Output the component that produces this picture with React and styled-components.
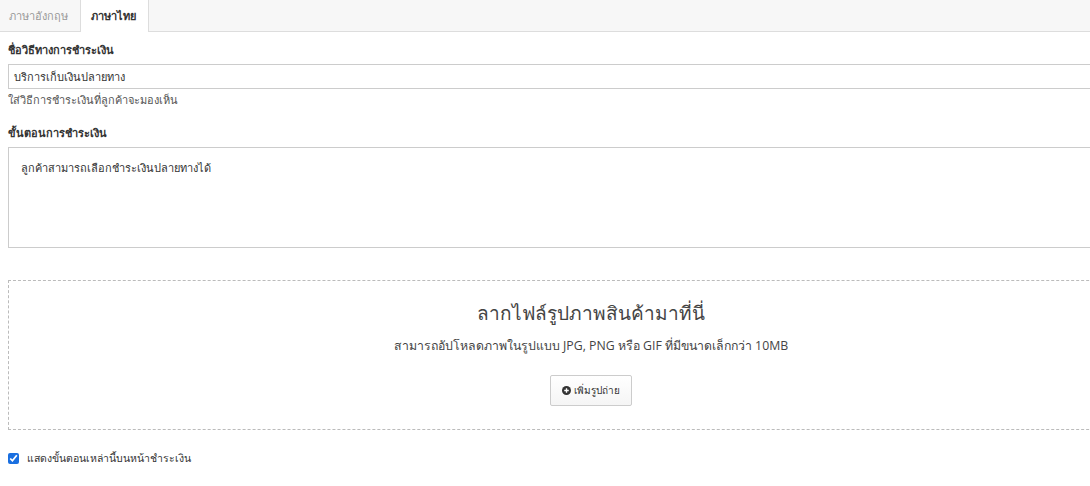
import React from "react";
import styled, { createGlobalStyle } from "styled-components";

const Global = createGlobalStyle`
  html, body { margin: 0; padding: 0; background: #fff; overflow: hidden; }
  body { font-family: "Open Sans", "Noto Sans", sans-serif; color: #333; }
`;

const Page = styled.div`
  width: 1182px;
`;

const TabBar = styled.div`
  display: flex;
  height: 31px;
  background: #f7f7f7;
  border-bottom: 1px solid #ddd;
  width: 1090px;
`;

const Tab = styled.div`
  display: flex;
  align-items: center;
  padding: ${(p) => (p.$active ? "0 12px 0 10px" : "0 11px 0 8px")};
  font-size: 11px;
  color: ${(p) => (p.$active ? "#333" : "#999")};
  font-weight: ${(p) => (p.$active ? 600 : 400)};
  background: ${(p) => (p.$active ? "#fff" : "transparent")};
  border-left: 1px solid ${(p) => (p.$active ? "#ddd" : "transparent")};
  border-right: 1px solid ${(p) => (p.$active ? "#ddd" : "transparent")};
  height: 32px;
  box-sizing: border-box;
  margin-bottom: -1px;
`;

const Form = styled.div`
  padding: 0 8px;
`;

const Field = styled.div`
  display: flex;
  flex-direction: column;
`;

const Label = styled.label`
  font-size: 11px;
  font-weight: 700;
  color: #333;
  margin-top: ${(p) => p.$top}px;
  margin-bottom: 6px;
  line-height: 16px;
`;

const Input = styled.div`
  height: 25px;
  box-sizing: border-box;
  border: 1px solid #ccc;
  padding: 0 5px;
  font-size: 11px;
  display: flex;
  align-items: center;
  color: #333;
`;

const Help = styled.div`
  font-size: 11px;
  color: #555;
  margin-top: 3px;
  line-height: 15px;
`;

const TextArea = styled.div`
  height: 101px;
  box-sizing: border-box;
  border: 1px solid #ccc;
  padding: 12px 12px;
  font-size: 11px;
  color: #333;
  line-height: 16px;
`;

const Drop = styled.div`
  margin-top: 32px;
  height: 150px;
  box-sizing: border-box;
  border: 1px dashed #bbb;
  display: flex;
  flex-direction: column;
  align-items: center;
  padding-top: 17px;
`;

const DropTitle = styled.div`
  font-size: 19px;
  color: #444;
  line-height: 30px;
`;

const DropSub = styled.div`
  font-size: 12.3px;
  color: #444;
  margin-top: 9px;
  line-height: 18px;
`;

const Button = styled.button`
  margin-top: 20px;
  height: 31px;
  width: 82px;
  border: 1px solid #ccc;
  border-radius: 2px;
  background: linear-gradient(#fff, #f5f5f5);
  font-family: inherit;
  font-size: 10px;
  color: #333;
  display: flex;
  align-items: center;
  justify-content: center;
  gap: 3px;
  padding: 0;
`;

const CheckRow = styled.label`
  display: flex;
  align-items: center;
  gap: 8px;
  margin-top: 20px;
  font-size: 10.5px;
  color: #333;
`;

const Check = styled.input`
  margin: 0;
  width: 11px;
  height: 11px;
  accent-color: #1a6fe0;
`;

export default function App() {
  return (
    <Page>
      <Global />
      <TabBar>
        <Tab>ภาษาอังกฤษ</Tab>
        <Tab $active>ภาษาไทย</Tab>
      </TabBar>
      <Form>
        <Field>
          <Label $top={10}>ชื่อวิธีทางการชำระเงิน</Label>
          <Input>บริการเก็บเงินปลายทาง</Input>
          <Help>ใส่วิธีการชำระเงินที่ลูกค้าจะมองเห็น</Help>
        </Field>
        <Field>
          <Label $top={18}>ขั้นตอนการชำระเงิน</Label>
          <TextArea>ลูกค้าสามารถเลือกชำระเงินปลายทางได้</TextArea>
        </Field>
        <Drop>
          <DropTitle>ลากไฟล์รูปภาพสินค้ามาที่นี่</DropTitle>
          <DropSub>สามารถอัปโหลดภาพในรูปแบบ JPG, PNG หรือ GIF ที่มีขนาดเล็กกว่า 10MB</DropSub>
          <Button>
            <svg width="9" height="9" viewBox="0 0 16 16">
              <circle cx="8" cy="8" r="8" fill="#333" />
              <path d="M8 4v8M4 8h8" stroke="#fff" strokeWidth="2.4" />
            </svg>
            เพิ่มรูปถ่าย
          </Button>
        </Drop>
        <CheckRow>
          <Check type="checkbox" defaultChecked />
          แสดงขั้นตอนเหล่านี้บนหน้าชำระเงิน
        </CheckRow>
      </Form>
    </Page>
  );
}
